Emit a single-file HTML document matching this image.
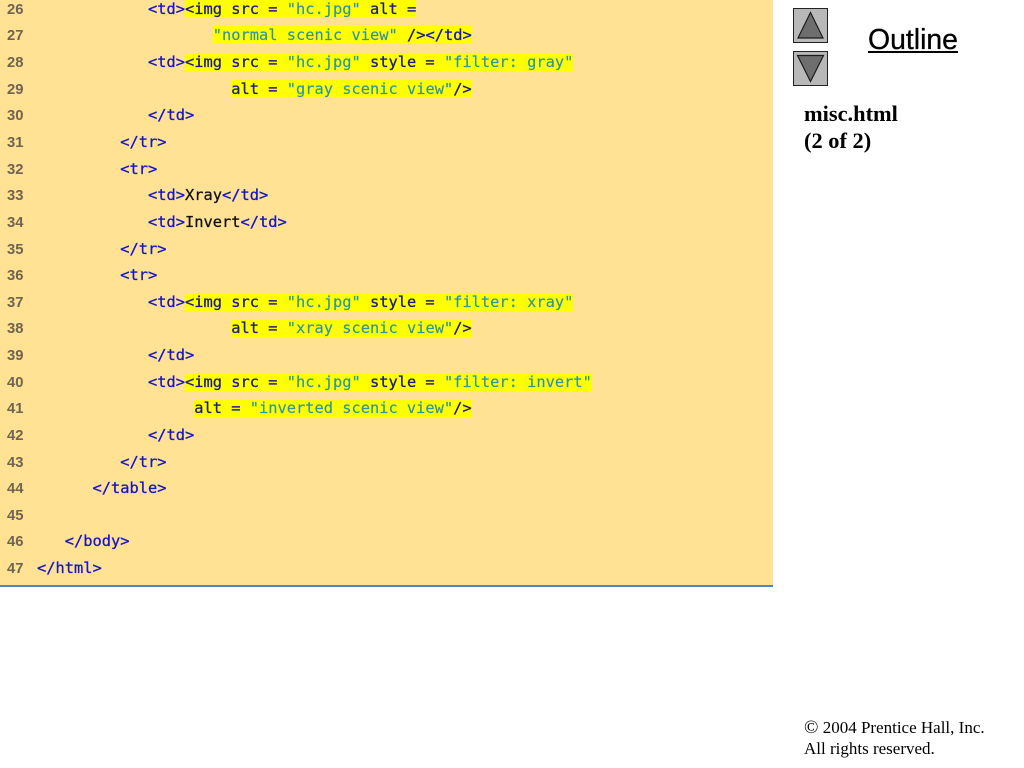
<!DOCTYPE html>
<html><head><meta charset="utf-8"><style>
html,body{margin:0;padding:0;width:1024px;height:768px;overflow:hidden;background:#fff}
#bg{position:absolute;left:0;top:0;width:773px;height:585px;background:#ffe294;border-bottom:2px solid #5b7fd0}
.n{position:absolute;left:7px;margin-top:.5px;font:bold 14.8px/18px "Liberation Sans",sans-serif;color:#6e6450}
.l{position:absolute;font:15.37px/18px "DejaVu Sans Mono",monospace;white-space:pre;color:#1616c8;-webkit-text-stroke:.3px currentColor}
.l i{font-style:normal}
.h{background:#ffff00;display:inline-block;height:18px}
.l i.a{color:#1c1c8c}.l i.s{color:#2c93a8;-webkit-text-stroke:.15px currentColor}.l i.k{color:#111}
.t{position:absolute;font-family:"Liberation Serif",serif;color:#000}
</style></head><body>
<div id="bg"></div>
<div class="n" style="top:0px">26</div><div class="l" style="top:0px;left:148px">&lt;td&gt;<span class="h"><i class="a">&lt;img src = </i><i class="s">"hc.jpg"</i><i class="a"> alt =</i></span></div>
<div class="n" style="top:26px">27</div><div class="l" style="top:26px;left:212.75px"><span class="h"><i class="s">"normal scenic view"</i><i class="a"> /&gt;</i>&lt;/td&gt;</span></div>
<div class="n" style="top:53px">28</div><div class="l" style="top:53px;left:148px">&lt;td&gt;<span class="h"><i class="a">&lt;img src = </i><i class="s">"hc.jpg"</i><i class="a"> style = </i><i class="s">"filter: gray"</i></span></div>
<div class="n" style="top:80px">29</div><div class="l" style="top:80px;left:231.25px"><span class="h"><i class="a">alt = </i><i class="s">"gray scenic view"</i><i class="a">/&gt;</i></span></div>
<div class="n" style="top:106px">30</div><div class="l" style="top:106px;left:148px">&lt;/td&gt;</div>
<div class="n" style="top:133px">31</div><div class="l" style="top:133px;left:120.25px">&lt;/tr&gt;</div>
<div class="n" style="top:160px">32</div><div class="l" style="top:160px;left:120.25px">&lt;tr&gt;</div>
<div class="n" style="top:186px">33</div><div class="l" style="top:186px;left:148px">&lt;td&gt;<i class="k">Xray</i>&lt;/td&gt;</div>
<div class="n" style="top:213px">34</div><div class="l" style="top:213px;left:148px">&lt;td&gt;<i class="k">Invert</i>&lt;/td&gt;</div>
<div class="n" style="top:240px">35</div><div class="l" style="top:240px;left:120.25px">&lt;/tr&gt;</div>
<div class="n" style="top:266px">36</div><div class="l" style="top:266px;left:120.25px">&lt;tr&gt;</div>
<div class="n" style="top:293px">37</div><div class="l" style="top:293px;left:148px">&lt;td&gt;<span class="h"><i class="a">&lt;img src = </i><i class="s">"hc.jpg"</i><i class="a"> style = </i><i class="s">"filter: xray"</i></span></div>
<div class="n" style="top:319px">38</div><div class="l" style="top:319px;left:231.25px"><span class="h"><i class="a">alt = </i><i class="s">"xray scenic view"</i><i class="a">/&gt;</i></span></div>
<div class="n" style="top:346px">39</div><div class="l" style="top:346px;left:148px">&lt;/td&gt;</div>
<div class="n" style="top:373px">40</div><div class="l" style="top:373px;left:148px">&lt;td&gt;<span class="h"><i class="a">&lt;img src = </i><i class="s">"hc.jpg"</i><i class="a"> style = </i><i class="s">"filter: invert"</i></span></div>
<div class="n" style="top:399px">41</div><div class="l" style="top:399px;left:194.25px"><span class="h"><i class="a">alt = </i><i class="s">"inverted scenic view"</i><i class="a">/&gt;</i></span></div>
<div class="n" style="top:426px">42</div><div class="l" style="top:426px;left:148px">&lt;/td&gt;</div>
<div class="n" style="top:453px">43</div><div class="l" style="top:453px;left:120.25px">&lt;/tr&gt;</div>
<div class="n" style="top:479px">44</div><div class="l" style="top:479px;left:92.5px">&lt;/table&gt;</div>
<div class="n" style="top:506px">45</div>
<div class="n" style="top:532px">46</div><div class="l" style="top:532px;left:64.75px">&lt;/body&gt;</div>
<div class="n" style="top:559px">47</div><div class="l" style="top:559px;left:37px">&lt;/html&gt;</div>
<svg style="position:absolute;left:793px;top:8px" width="36" height="79" viewBox="0 0 36 79">
<rect x=".5" y=".5" width="34" height="34" fill="#b8b8b8" stroke="#222"/>
<rect x=".5" y="43.5" width="34" height="34" fill="#b8b8b8" stroke="#222"/>
<path d="M17.5 4.5L30 30H5Z" fill="#6e6e6e" stroke="#1c1c1c" stroke-width="1.2"/>
<path d="M4.5 47.5H30.5L17.5 73.5Z" fill="#6e6e6e" stroke="#1c1c1c" stroke-width="1.2"/>
</svg>
<div style="position:absolute;left:868px;top:24px;font:28.4px/33px 'Liberation Sans',sans-serif;color:#000;text-decoration:underline;text-decoration-thickness:2px;text-underline-offset:2px;-webkit-text-stroke:.3px #000">Outline</div>
<div class="t" style="left:804px;top:100px;font-weight:bold;font-size:22.4px;line-height:27px">misc.html<br>(2 of 2)</div>
<div class="t" style="left:804px;top:717px;font-size:17px;line-height:21px"><span style="font-size:19px;line-height:18px">©</span> 2004 Prentice Hall, Inc.<br>All rights reserved.</div>
</body></html>
